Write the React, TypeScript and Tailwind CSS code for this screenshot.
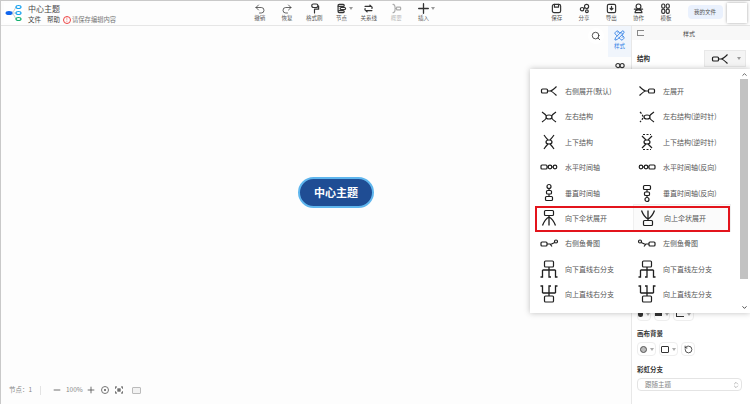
import {ReactNode} from 'react';
import {ChevronDown, ChevronUp, ChevronsUpDown, Search, Undo2, Redo2, Plus, Minus, RotateCcw, PencilRuler} from 'lucide-react';

const cjk = {fontFamily: '"Noto Sans CJK SC", "Noto Sans", sans-serif'};

function Base({children, className = ''}: {children: ReactNode; className?: string}) {
  return (
    <svg viewBox="0 0 24 24" className={`w-6 h-6 ${className}`} fill="none" stroke="#1f1f1f" strokeWidth="1.200">
      {children}
    </svg>
  );
}

const rightOpen = <><rect x="4.500" y="10" width="6" height="4" rx="1"/><path d="M10.500 12H13Q15 12 19.500 7.500M13 12Q15 12 19.500 16.500"/></>;
const leftRight = <><ellipse cx="12" cy="12" rx="3" ry="2"/><path d="M5 7Q8 9 9.500 11M5 17Q8 15 9.500 13M19 7Q16 9 14.500 11M19 17Q16 15 14.500 13"/></>;
const leftRightCcw = <><ellipse cx="12" cy="12" rx="3" ry="2"/><path d="M5 7Q8 9 9.500 11M5 17Q8 15 9.500 13"/><path d="M19 7Q16 10 16 12T19 17" strokeDasharray="2 1.500"/></>;
const upDown = <><ellipse cx="12" cy="12" rx="3" ry="2"/><path d="M7 5Q9 8 11 10M17 5Q15 8 13 10M7 19Q9 16 11 14M17 19Q15 16 13 14"/></>;
const upDownCcw = <><ellipse cx="12" cy="12" rx="3" ry="2"/><path d="M7 6Q9 8 11 10M17 6Q15 8 13 10M7 18Q9 16 11 14M17 18Q15 16 13 14"/><path d="M8 4.500H16M8 19.500H16" strokeDasharray="2 1.500"/></>;
const hTimeline = <><rect x="4" y="10" width="6" height="4" rx="1"/><circle cx="13" cy="12" r="1.800"/><circle cx="18" cy="12" r="1.800"/><path d="M10 12H11.200M14.800 12H16.200"/></>;
const vTimeline = <><circle cx="12" cy="5.500" r="2"/><rect x="9.500" y="9.500" width="5" height="3.500" rx="1"/><rect x="8.500" y="15.500" width="7" height="4" rx="1"/><path d="M12 7.500V9.500M12 13V15.500"/></>;
const umbrella = <><rect x="7.500" y="4.500" width="9" height="5" rx="1"/><path d="M12 9.500V19.500M12 11Q8 13 5.500 19.500M12 11Q16 13 18.500 19.500" strokeWidth="1.300"/></>;
const fishbone = <><rect x="4" y="10" width="6" height="4" rx="1"/><circle cx="19" cy="9.500" r="1.500"/><path d="M10 12H13L15 14.500M13.500 12.500L17.800 10.500"/></>;
const branch = <><rect x="7.500" y="4" width="9" height="6" rx="1"/><path d="M12 10V13M5.500 13H18.500M5.500 13V20H3.500M12 13V20H14M18.500 13V20H20.500" strokeWidth="1.300"/></>;

const items: [string, ReactNode, string][] = [
  ['右侧展开(默认)', rightOpen, ''],
  ['左展开', rightOpen, '-scale-x-100'],
  ['左右结构', leftRight, ''],
  ['左右结构(逆时针)', leftRightCcw, '-scale-x-100'],
  ['上下结构', upDown, ''],
  ['上下结构(逆时针)', upDownCcw, ''],
  ['水平时间轴', hTimeline, ''],
  ['水平时间轴(反向)', hTimeline, '-scale-x-100'],
  ['垂直时间轴', vTimeline, ''],
  ['垂直时间轴(反向)', vTimeline, '-scale-y-100'],
  ['向下伞状展开', umbrella, ''],
  ['向上伞状展开', umbrella, '-scale-y-100'],
  ['右侧鱼骨图', fishbone, ''],
  ['左侧鱼骨图', fishbone, '-scale-x-100'],
  ['向下直线右分支', branch, ''],
  ['向下直线左分支', branch, '-scale-x-100'],
  ['向上直线右分支', branch, '-scale-y-100'],
  ['向上直线左分支', branch, '-scale-100'],
];

function ToolIcon({children, w = 11}: {children: ReactNode; w?: number}) {
  return (
    <svg viewBox="0 0 16 16" width={w} height={w} fill="none" stroke="#333" strokeWidth="1.700" strokeLinecap="round" strokeLinejoin="round">
      {children}
    </svg>
  );
}

function Tool({icon, label, caret, faded}: {icon: ReactNode; label: string; caret?: boolean; faded?: boolean}) {
  return (
    <div className={`w-[27.3px] flex flex-col items-center ${faded ? 'opacity-40' : ''}`}>
      <div className="h-[11px] relative flex items-center justify-center">
        {icon}
        {caret && <span className="absolute -right-[6px] top-[4px] border-x-[2px] border-t-[3px] border-x-transparent border-t-[#999]"/>}
      </div>
      <span className="text-[5.500px] leading-[9px] text-[#555] whitespace-nowrap">{label}</span>
    </div>
  );
}

function MiniSelect({children, w}: {children: ReactNode; w: string}) {
  return (
    <div className={`${w} h-[14px] border border-[#eee] rounded-sm flex items-center justify-center gap-[3px] bg-white`}>
      {children}
      <span className="border-x-[2px] border-t-[3px] border-x-transparent border-t-[#aaa]"/>
    </div>
  );
}

export default function App() {
  return (
    <div className="relative w-[750px] h-[404px] overflow-hidden flex flex-col bg-[#fdfdfd] border-t border-l border-[#c9c9c9]" style={cjk}>
      <header className="h-[25px] shrink-0 flex items-start border-b border-[#e6e6e6] bg-[#fdfdfd]">
        <div className="w-[245px] flex pl-[3px] pt-[2px]">
          <svg viewBox="0 0 20 20" width="20" height="20" className="bg-white">
            <path d="M6 10Q10 10 12 4M6 10H12M6 10Q10 10 12 16" stroke="#ccc" fill="none"/>
            <ellipse cx="5" cy="10" rx="3.500" ry="2" fill="#1166ee"/>
            <ellipse cx="14.500" cy="4" rx="2.500" ry="1.500" fill="#fff" stroke="#1aa3f0" strokeWidth="1.200"/>
            <ellipse cx="14.500" cy="10" rx="2.500" ry="1.500" fill="#fff" stroke="#1aa3f0" strokeWidth="1.200"/>
            <ellipse cx="14.500" cy="16" rx="2.500" ry="1.500" fill="#fff" stroke="#16b070" strokeWidth="1.200"/>
          </svg>
          <div className="ml-[4px]">
            <div className="text-[8px] leading-[11px] text-[#444]">中心主题</div>
            <div className="flex items-center text-[6.500px] leading-[9px] text-[#444] mt-[1px]">
              <span>文件</span>
              <span className="ml-[6px]">帮助</span>
              <span className="ml-[3px] w-[8px] h-[8px] rounded-full border border-[#ee4444] text-[#ee4444] text-[6px] leading-[6px] flex items-center justify-center">!</span>
              <span className="ml-[1px] text-[6.300px] text-[#777]">请保存编辑内容</span>
            </div>
          </div>
        </div>
        <div className="flex pt-[2px]">
          <Tool label="撤销" icon={<Undo2 size={12} color="#333" strokeWidth={1.500}/>}/>
          <Tool label="恢复" icon={<Redo2 size={12} color="#333" strokeWidth={1.500}/>}/>
          <Tool label="格式刷" icon={<ToolIcon><rect x="4" y="1.500" width="9" height="5" rx="2.500"/><path d="M13 4.500H14V9H8V14.500"/></ToolIcon>}/>
          <Tool label="节点" caret icon={<ToolIcon><rect x="3" y="2" width="9" height="3" rx="1.500"/><rect x="6" y="6.500" width="8" height="3" rx="1.500"/><rect x="3" y="11" width="9" height="3" rx="1.500"/><path d="M3 5V11"/></ToolIcon>}/>
          <Tool label="关系线" icon={<ToolIcon><path d="M3 5H12L10 3M13 11H4L6 13M12 5Q14 6 13 8M4 11Q2 10 3 8"/></ToolIcon>}/>
          <Tool label="概要" faded icon={<ToolIcon><path d="M3 2Q6 2 6 8T3 14M6 8H8"/><rect x="8" y="6" width="6" height="4" rx="1"/></ToolIcon>}/>
          <Tool label="插入" caret icon={<ToolIcon><path d="M8 1V15M1 8H15" strokeWidth="1.900"/></ToolIcon>}/>
        </div>
        <div className="flex pt-[2px] ml-[106px]">
          <Tool label="保存" icon={<ToolIcon><rect x="2" y="2" width="12" height="12" rx="2.500"/><path d="M5 2V6H11V2"/></ToolIcon>}/>
          <Tool label="分享" icon={<ToolIcon><circle cx="4.500" cy="9" r="2.500"/><circle cx="11" cy="5" r="3"/><circle cx="11.500" cy="12" r="2"/><path d="M7 8L8.500 7"/></ToolIcon>}/>
          <Tool label="导出" icon={<ToolIcon><rect x="2" y="2" width="12" height="12" rx="2"/><path d="M8 5V9M6 8L8 10L10 8" strokeWidth="1.800"/></ToolIcon>}/>
          <Tool label="协作" icon={<ToolIcon><circle cx="8" cy="5" r="3.500"/><path d="M2 9H14M3 14Q3 10 8 10T13 14Z"/></ToolIcon>}/>
          <Tool label="模板" icon={<ToolIcon><rect x="2.500" y="1.500" width="4.500" height="6" rx="2"/><rect x="9" y="1.500" width="4.500" height="6" rx="2"/><rect x="2.500" y="9" width="4.500" height="6" rx="2"/><rect x="9" y="9" width="4.500" height="6" rx="2"/></ToolIcon>}/>
        </div>
        <div className="ml-[8px] mt-[4px] w-[35px] h-[14px] rounded-sm bg-[#eaf1fd] text-[5.500px] leading-[14px] text-center text-[#555]">我的文件</div>
        <div className="ml-[4px] mt-[2px] w-[20px] h-[20px] bg-white shadow-[0_0_3px_rgba(0,0,0,0.35)]"/>
      </header>

      <div className="flex-1 flex min-h-0">
        <main className="relative flex-1 min-w-0">
          <div className="absolute right-[4px] top-[2px] w-[16px] h-[16px] rounded-full bg-white flex items-center justify-center">
            <Search size={10} color="#333" strokeWidth={2}/>
          </div>
          <div className="absolute left-[297px] top-[151px] w-[76px] h-[31px] rounded-full border-2 border-[#5fb6ee] bg-[#1f4d94] text-white text-[11px] font-bold flex items-center justify-center">中心主题</div>
          <div className="absolute left-[8px] bottom-[7px] flex items-center h-[14px] text-[#888]">
            <span className="text-[6.500px] w-[31px]">节点：1</span>
            <span className="w-px h-[9px] bg-[#e3e3e3]"/>
            <Minus size={10} color="#555" strokeWidth={2} className="ml-[11px]"/>
            <span className="text-[6.500px] ml-[4px] w-[17px]">100%</span>
            <Plus size={10} color="#555" strokeWidth={2} className="ml-[3px]"/>
            <span className="ml-[5px] w-[8px] h-[8px] rounded-full border border-[#777] flex items-center justify-center"><span className="w-[2px] h-[2px] rounded-full bg-[#555]"/></span>
            <svg viewBox="0 0 8 8" width="8" height="8" className="ml-[6px]" fill="none" stroke="#555" strokeWidth="1.200"><path d="M0 3V1H2M6 1H8V3M8 5V7H6M2 7H0V5"/><rect x="3" y="3" width="2" height="2"/></svg>
            <span className="ml-[9px] w-[9px] h-[7px] border border-[#bbb] rounded-[1px] bg-[#f2f2f2]"/>
          </div>
        </main>

        <aside className="w-[23px] shrink-0 bg-[#fdfdfd]">
          <div className="h-[31px] bg-[#f0f5fc] flex flex-col items-center pt-[4px]">
            <PencilRuler size={11} color="#2f7fe6" strokeWidth={2}/>
            <span className="text-[5.500px] leading-[9px] mt-[1px] text-[#2f7fe6]">样式</span>
          </div>
          <div className="flex justify-center mt-[5px]">
            <svg viewBox="0 0 12 8" width="10" height="7" fill="none" stroke="#333" strokeWidth="1.300"><circle cx="3.500" cy="4" r="2.500"/><circle cx="8.500" cy="4" r="2.500"/></svg>
          </div>
        </aside>

        <section className="w-[119px] shrink-0 border-l border-[#e8e8e8] flex flex-col bg-white">
          <div className="h-[14px] bg-[#f8f8f8] flex items-center text-[6px] text-[#444]">
            <span className="ml-[5px] w-[7px] h-[6px] border-l border-y border-[#888]"/>
            <span className="ml-[39px]">样式</span>
          </div>
          <div className="flex items-center justify-between pl-[5px] pr-[4px] mt-[10px]">
            <span className="text-[6.500px] font-bold text-[#333]">结构</span>
            <div className="w-[42px] h-[17px] bg-[#f4f4f4] border border-[#e8e8e8] flex items-center">
              <Base className="ml-[3px]">{rightOpen}</Base>
              <span className="ml-[5px] border-x-[2px] border-t-[3px] border-x-transparent border-t-[#999]"/>
            </div>
          </div>
          <div className="mt-auto pl-[5px] pb-[13px]">
            <div className="flex gap-[3px]">
              <MiniSelect w="w-[14px]"><span className="w-[6px] h-[6px] rounded-sm bg-[#333]"/></MiniSelect>
              <MiniSelect w="w-[16px]"><span className="w-[7px] h-[4px] border-y-2 border-[#333]"/></MiniSelect>
              <MiniSelect w="w-[21px]"><span className="w-[8px] h-[6px] border-l border-b border-[#333]"/></MiniSelect>
            </div>
            <div className="text-[6.500px] leading-[10px] font-bold text-[#333] mt-[7px]">画布背景</div>
            <div className="flex gap-[3px] mt-[4px]">
              <MiniSelect w="w-[19px]"><span className="w-[7px] h-[7px] rounded-sm border border-[#555] bg-[#bbb]"/></MiniSelect>
              <MiniSelect w="w-[19px]"><span className="w-[8px] h-[7px] rounded-[1px] border border-[#333]"/></MiniSelect>
              <div className="w-[14px] h-[14px] border border-[#eee] rounded-sm flex items-center justify-center">
                <RotateCcw size={9} color="#222" strokeWidth={2}/>
              </div>
            </div>
            <div className="text-[6.500px] leading-[10px] font-bold text-[#333] mt-[8px]">彩虹分支</div>
            <div className="w-[105px] h-[13px] mt-[4px] border border-[#e4e4e4] rounded-sm flex items-center justify-between pl-[7px] pr-[1px] text-[6.500px] text-[#888]">
              跟随主题
              <ChevronsUpDown size={8} color="#999"/>
            </div>
          </div>
        </section>
      </div>

      <div className="absolute left-[529px] top-[68px] w-[220px] h-[244px] bg-white shadow-[0_0_6px_rgba(0,0,0,0.25)] flex">
        <div className="w-[208px] pl-[5px] pt-[9.500px]">
          <div className="relative grid grid-cols-[98px_98px] auto-rows-[25.4px]">
            {items.map(([label, icon, cls], i) => (
              <div key={label} className={`flex items-center ${i === 11 ? 'bg-[#fbfbfb] border border-[#f0f0f0] -my-[1px]' : ''}`}>
                <Base className={`ml-[2px] shrink-0 ${cls}`}>{icon}</Base>
                <span className="ml-[4px] text-[7px] text-[#555] whitespace-nowrap">{label}</span>
              </div>
            ))}
            <div className="absolute left-[0px] top-[127px] w-[195px] h-[26px] border-2 border-[#e3141c] pointer-events-none"/>
          </div>
        </div>
        <div className="w-[12px] flex flex-col items-center pt-[2px]">
          <ChevronUp size={7} color="#555" strokeWidth={3}/>
          <div className="w-[8px] h-[200px] mt-[1px] bg-[#c2c2c2]"/>
          <ChevronDown size={7} color="#333" strokeWidth={3} className="mt-auto mb-[2px]"/>
        </div>
      </div>
    </div>
  );
}
